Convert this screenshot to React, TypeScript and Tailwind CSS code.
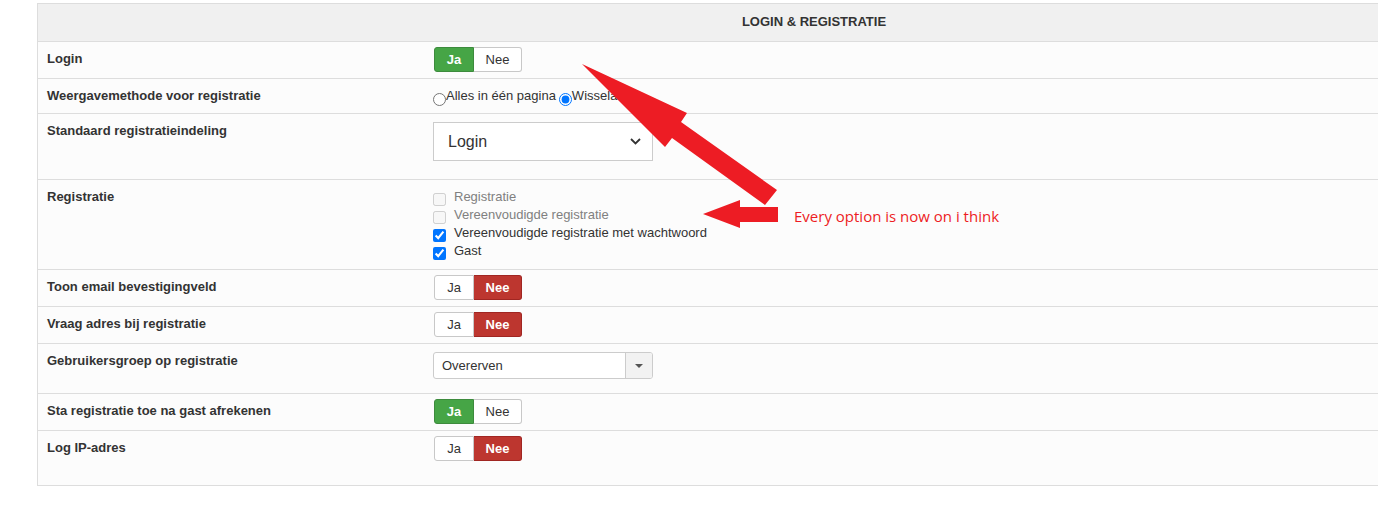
import React from "react";

function Toggle({ yes }: { yes: boolean }) {
  return (
    <div className="ml-px flex h-[25px] text-[13px] leading-none">
      <span
        className={
          yes
            ? "flex w-[40px] items-center justify-center rounded-l-[3px] border border-[#3d8b3d] bg-[#46a546] font-bold text-white"
            : "flex w-[40px] items-center justify-center rounded-l-[3px] border border-[#c8c8c8] bg-white text-[#333]"
        }
      >
        Ja
      </span>
      <span
        className={
          !yes
            ? "flex w-[48px] items-center justify-center rounded-r-[3px] border border-l-0 border-[#a02622] bg-[#bd362f] font-bold text-white"
            : "flex w-[48px] items-center justify-center rounded-r-[3px] border border-l-0 border-[#c8c8c8] bg-white text-[#333]"
        }
      >
        Nee
      </span>
    </div>
  );
}

function Label({ children }: { children: React.ReactNode }) {
  return (
    <div className="w-[395px] shrink-0 pl-[9px] pt-2 font-bold leading-[18px]">
      {children}
    </div>
  );
}

function CheckLine({
  label,
  checked,
  disabled,
}: {
  label: string;
  checked?: boolean;
  disabled?: boolean;
}) {
  return (
    <div className="flex h-[18px] items-center gap-[8px]">
      <input
        type="checkbox"
        defaultChecked={checked}
        disabled={disabled}
        className="mt-1 h-[13px] w-[13px]"
      />
      <span className={disabled ? "text-[#808080]" : "text-[#333]"}>{label}</span>
    </div>
  );
}

export default function App() {
  return (
    <div className="relative h-[512px] w-[1378px] overflow-hidden bg-white pl-[37px] pt-[3px] font-['Liberation_Sans',Arial,sans-serif] text-[13px] text-[#333]">
      <div className="w-[1553px] border border-r-0 border-[#ddd] bg-[#fcfcfc]">
        <div className="flex h-[37px] items-center justify-center bg-[#f0f0f0] pb-[1px] text-[13px] font-bold">
          LOGIN &amp; REGISTRATIE
        </div>

        <div className="flex h-[37px] border-t border-[#ddd]">
          <Label>Login</Label>
          <div className="pt-[5px]">
            <Toggle yes={true} />
          </div>
        </div>

        <div className="flex h-[35px] border-t border-[#ddd]">
          <Label>Weergavemethode voor registratie</Label>
          <div className="mt-2 flex h-[18px] items-center leading-[18px]">
            <input type="radio" name="wm" className="mt-[7px] h-[13px] w-[13px]" />
            <span>Alles in één pagina</span>
            <span className="w-[3px]" />
            <input type="radio" name="wm" defaultChecked className="mt-[7px] h-[13px] w-[13px]" />
            <span>Wisselaar</span>
          </div>
        </div>

        <div className="flex h-[66px] border-t border-[#ddd]">
          <Label>Standaard registratieindeling</Label>
          <div className="pt-2">
            <div className="flex h-[39px] w-[220px] items-center justify-between border border-[#ccc] bg-white pl-[14px] pr-[11px] text-[16px] text-[#333]">
              <span>Login</span>
              <svg width="11" height="7" viewBox="0 0 11 7">
                <path d="M1 1l4.5 4.5L10 1" fill="none" stroke="#333" strokeWidth="1.8" />
              </svg>
            </div>
          </div>
        </div>

        <div className="flex h-[90px] border-t border-[#ddd]">
          <Label>Registratie</Label>
          <div className="pt-2 leading-[18px]">
            <CheckLine label="Registratie" disabled />
            <CheckLine label="Vereenvoudigde registratie" disabled />
            <CheckLine label="Vereenvoudigde registratie met wachtwoord" checked />
            <CheckLine label="Gast" checked />
          </div>
        </div>

        <div className="flex h-[37px] border-t border-[#ddd]">
          <Label>Toon email bevestigingveld</Label>
          <div className="pt-[5px]">
            <Toggle yes={false} />
          </div>
        </div>

        <div className="flex h-[37px] border-t border-[#ddd]">
          <Label>Vraag adres bij registratie</Label>
          <div className="pt-[5px]">
            <Toggle yes={false} />
          </div>
        </div>

        <div className="flex h-[50px] border-t border-[#ddd]">
          <Label>Gebruikersgroep op registratie</Label>
          <div className="pt-2">
            <div className="flex h-[27px] w-[220px] overflow-hidden rounded-[3px] border border-[#ccc] bg-white">
              <span className="flex flex-1 items-center pl-[8px] text-[13px]">Overerven</span>
              <span className="flex w-[27px] items-center justify-center border-l border-[#ccc] bg-[#f2f2f2]">
                <svg width="8" height="4" viewBox="0 0 8 4">
                  <path d="M0 0h8L4 4z" fill="#555" />
                </svg>
              </span>
            </div>
          </div>
        </div>

        <div className="flex h-[37px] border-t border-[#ddd]">
          <Label>Sta registratie toe na gast afrekenen</Label>
          <div className="pt-[5px]">
            <Toggle yes={true} />
          </div>
        </div>

        <div className="flex h-[55px] border-t border-[#ddd]">
          <Label>Log IP-adres</Label>
          <div className="pt-[5px]">
            <Toggle yes={false} />
          </div>
        </div>
      </div>

      <svg
        className="pointer-events-none absolute left-0 top-0"
        width="1378"
        height="512"
        viewBox="0 0 1378 512"
      >
        <polygon
          points="582,64 687,113 681,122 777,190 765,205 672,138 665,147"
          fill="#ed1c24"
        />
        <polygon
          points="703,214 740,200 740,207 778,207 778,222 740,222 740,228"
          fill="#ed1c24"
        />
      </svg>
      <div className="absolute left-[794px] top-[206px] font-['Open_Sans',sans-serif] text-[15px] leading-[21px] text-[#ed1c24]">
        Every option is now on i think
      </div>
    </div>
  );
}
